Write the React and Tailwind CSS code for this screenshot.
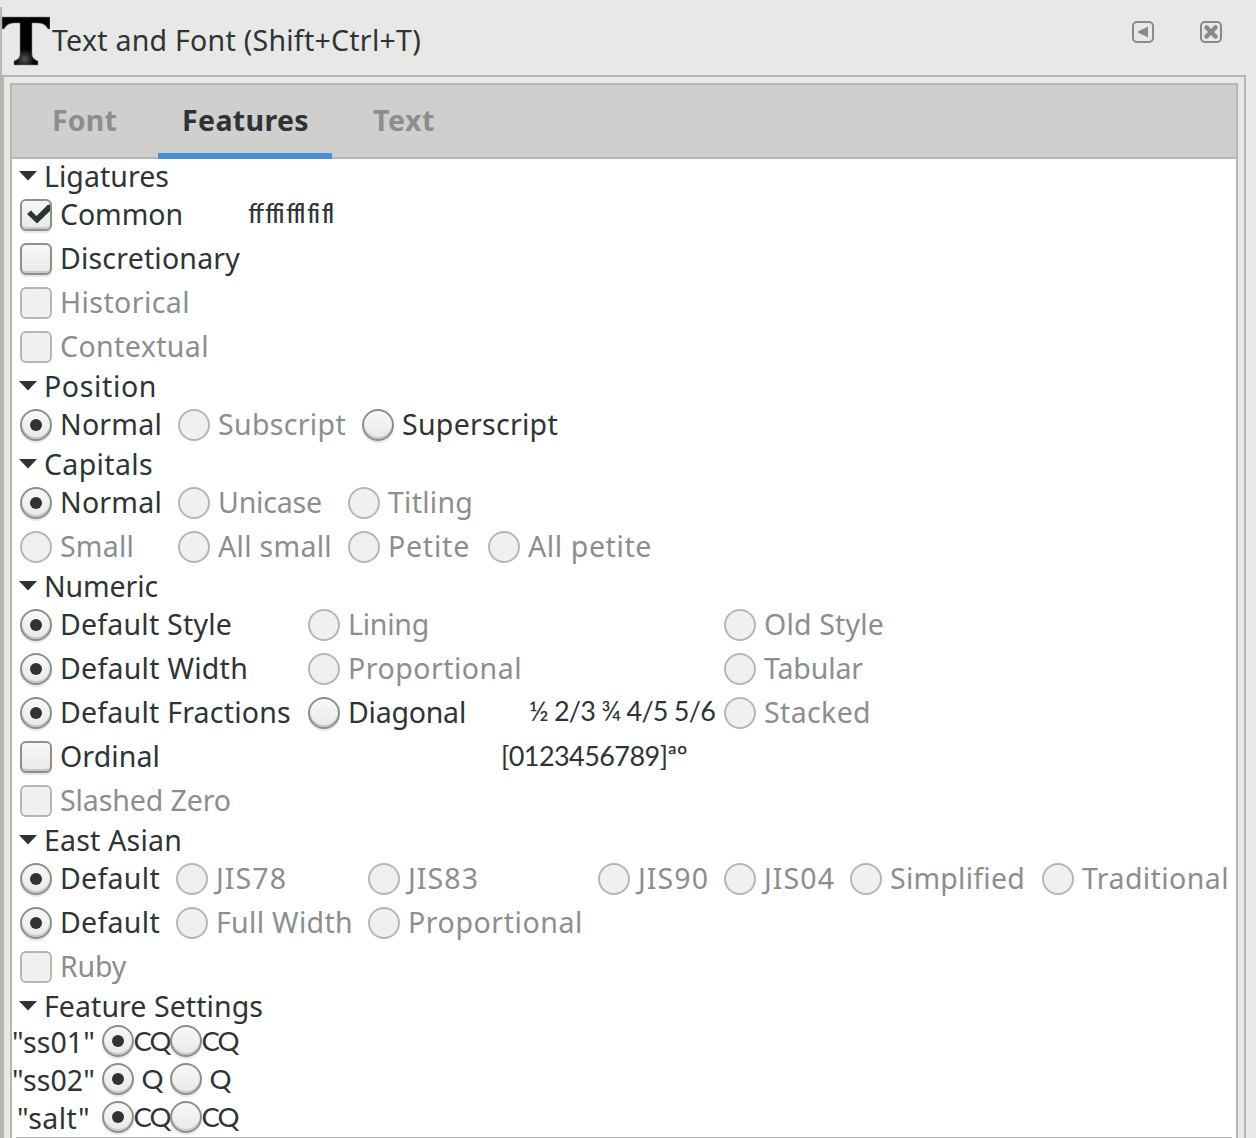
import { useLayoutEffect, useRef, useState } from "react";

function Fit({ text, w, className = "" }) {
  const ref = useRef(null);
  const [spacing, setSpacing] = useState(0);
  useLayoutEffect(() => {
    const natural = ref.current.getBoundingClientRect().width;
    setSpacing((w - 1 - natural) / text.length);
  }, [text, w]);
  return (
    <span className={`block shrink-0 whitespace-pre ${className}`} style={{ width: w }}>
      <span ref={ref} className="inline-block" style={{ letterSpacing: spacing }}>
        {text}
      </span>
    </span>
  );
}

function Check({ checked, off }) {
  return (
    <span
      className={
        off
          ? "block size-8 shrink-0 rounded-md border-2 border-[#b6b6b3] bg-[#f0f0f0]"
          : "block size-8 shrink-0 rounded-md border-2 border-[#8f8f8a] bg-linear-to-b from-[#f8f8f8] to-[#e9e9e7] shadow-[inset_0_-2px_0_#c9c9c6,0_2px_1px_#e6e6e6]"
      }
    >
      {checked && (
        <svg viewBox="0 0 28 28" className="block size-7 overflow-visible">
          <path d="M5 13L9 9.5L14.5 15L25.5 4L28 3.5V10L15 22.5Z" fill="#2e3436" />
        </svg>
      )}
    </span>
  );
}

function Radio({ checked, off }) {
  return (
    <span
      className={
        off
          ? "block size-8 shrink-0 rounded-full border-2 border-[#b6b6b3] bg-[#f0f0f0]"
          : "flex size-8 shrink-0 items-center justify-center rounded-full border-2 border-[#8f8f8a] bg-linear-to-b from-[#f8f8f8] to-[#e9e9e7] shadow-[inset_0_-2px_0_#c9c9c6,0_2px_1px_#e6e6e6]"
      }
    >
      {checked && <span className="block size-3 rounded-full bg-[#2e3436]" />}
    </span>
  );
}

function Item({ label, w, box, checked, off, children }) {
  return (
    <div className={off ? "flex items-center gap-2 text-[#8b8e8f]" : "flex items-center gap-2"}>
      {box ? <Check checked={checked} off={off} /> : <Radio checked={checked} off={off} />}
      <Fit text={label} w={w} className="-mt-0.5" />
      {children}
    </div>
  );
}

function Header({ title, w }) {
  return (
    <div className="flex h-[34px] items-center pl-[7px]">
      <svg viewBox="0 0 18 10" className="mr-[7px] h-2.5 w-[18px] shrink-0">
        <path d="M0 0H18L9 9.5Z" fill="#2e3436" />
      </svg>
      <Fit text={title} w={w} />
    </div>
  );
}

function Row({ cols = "grid-cols-1", children }) {
  return <div className={`grid h-11 items-center pl-2 ${cols}`}>{children}</div>;
}

function Setting({ tag, w, sample, sw }) {
  return (
    <div className="flex h-[38px] items-center">
      <div className="mr-1.5 mt-0.5 flex w-[84px] justify-center">
        <Fit text={tag} w={w} />
      </div>
      <Radio checked />
      <div className="flex w-9 justify-center font-['Lato'] text-[27.5px]">
        <Fit text={sample} w={sw} />
      </div>
      <Radio />
      <div className="flex w-9 justify-center font-['Lato'] text-[27.5px]">
        <Fit text={sample} w={sw} />
      </div>
    </div>
  );
}

const CAPS = "grid-cols-[158px_170px_140px_200px]";
const NUM = "grid-cols-[288px_416px_200px]";
const ASIA = "grid-cols-[156px_192px_230px_126px_126px_192px_186px]";
const ASIA2 = "grid-cols-[156px_192px_300px]";

export default function App() {
  return (
    <div className="flex h-[1138px] w-[1256px] flex-col overflow-hidden bg-[#e8e8e6] font-['Noto_Sans',sans-serif] text-[28.5px] leading-[34px] text-[#2e3436]">
      <div className="mt-[7px] flex h-[68px] shrink-0 border-l-2 border-[#b6b6b3]">
        <svg viewBox="0 0 48 50" className="mt-[9px] h-[50px] w-12 shrink-0">
          <defs>
            <radialGradient id="shine" cx="0.47" cy="0.88" r="0.22">
              <stop offset="0" stopColor="#555" />
              <stop offset="1" stopColor="#000" />
            </radialGradient>
          </defs>
          <path
            d="M0 1H48V13H46Q43 7 36 7H30V38Q30 43 36 45V49H12V45Q18 43 18 38V7H12Q5 7 2 13H0Z"
            fill="url(#shine)"
            stroke="#888"
            strokeWidth="0.6"
          />
        </svg>
        <Fit text="Text and Font (Shift+Ctrl+T)" w={370} className="ml-0.5 mt-4" />
        <div className="ml-auto mr-8 mt-3.5 flex gap-11">
          <svg viewBox="0 0 24 24" className="size-6">
            <rect x="1" y="1" width="20" height="20" rx="4" fill="none" stroke="#888a8a" strokeWidth="2" />
            <path d="M5 11L16 5.5V16.5Z" fill="#888a8a" />
          </svg>
          <svg viewBox="0 0 24 24" className="size-6">
            <rect x="1" y="1" width="20" height="20" rx="4" fill="none" stroke="#888a8a" strokeWidth="2" />
            <path d="M6.5 6.5L15.5 15.5M15.5 6.5L6.5 15.5" stroke="#888a8a" strokeWidth="4.5" strokeLinecap="round" />
          </svg>
        </div>
      </div>
      <div className="mr-2.5 flex flex-1 border-r-2 border-t-2 border-[#b6b6b3]">
        <div className="w-1 shrink-0 bg-[#b6b6b1]" />
        <div className="ml-1.5 mr-1.5 mt-1.5 flex flex-1 flex-col border-x-2 border-t-2 border-[#b6b6b3] bg-white">
          <div className="flex h-[74px] shrink-0 border-b-2 border-[#b6b6b3] bg-[#cfcfcd] font-bold text-[#8b8e8f]">
            <div className="w-[146px] pl-10 pt-[18px]">
              <Fit text="Font" w={66} />
            </div>
            <div className="h-[74px] w-[174px] border-b-[6px] border-[#4a90d9] pl-6 pt-[18px] text-[#2e3436]">
              <Fit text="Features" w={128} />
            </div>
            <div className="pl-[41px] pt-[18px]">
              <Fit text="Text" w={63} />
            </div>
          </div>

          <Header title="Ligatures" w={126} />
          <Row>
            <Item box checked label="Common" w={124}>
              <Fit text="ff ffi ffl fi fl" w={81} className="ml-[56px] -mt-1 font-['Lato'] text-[27px]" />
            </Item>
          </Row>
          <Row><Item box label="Discretionary" w={181} /></Row>
          <Row><Item box off label="Historical" w={131} /></Row>
          <Row><Item box off label="Contextual" w={150} /></Row>

          <Header title="Position" w={114} />
          <Row cols="grid-cols-[158px_184px_220px]">
            <Item checked label="Normal" w={103} />
            <Item off label="Subscript" w={129} />
            <Item label="Superscript" w={157} />
          </Row>

          <Header title="Capitals" w={110} />
          <Row cols={CAPS}>
            <Item checked label="Normal" w={103} />
            <Item off label="Unicase" w={105} />
            <Item off label="Titling" w={86} />
          </Row>
          <Row cols={CAPS}>
            <Item off label="Small" w={75} />
            <Item off label="All small" w={115} />
            <Item off label="Petite" w={83} />
            <Item off label="All petite" w={125} />
          </Row>

          <Header title="Numeric" w={115} />
          <Row cols={NUM}>
            <Item checked label="Default Style" w={173} />
            <Item off label="Lining" w={82} />
            <Item off label="Old Style" w={121} />
          </Row>
          <Row cols={NUM}>
            <Item checked label="Default Width" w={189} />
            <Item off label="Proportional" w={175} />
            <Item off label="Tabular" w={100} />
          </Row>
          <Row cols={NUM}>
            <Item checked label="Default Fractions" w={232} />
            <Item label="Diagonal" w={119}>
              <Fit text="½ 2/3 ¾ 4/5 5/6" w={187} className="ml-[54px] -mt-1 font-['Lato'] text-[27px]" />
            </Item>
            <Item off label="Stacked" w={108} />
          </Row>
          <Row cols="grid-cols-[481px_300px]">
            <Item box label="Ordinal" w={101} />
            <Fit text="[0123456789]ªº" w={187} className="-mt-[3px] font-['Lato'] text-[27px]" />
          </Row>
          <Row><Item box off label="Slashed Zero" w={172} /></Row>

          <Header title="East Asian" w={139} />
          <Row cols={ASIA}>
            <Item checked label="Default" w={101} />
            <Item off label="JIS78" w={72} />
            <Item off label="JIS83" w={72} />
            <Item off label="JIS90" w={72} />
            <Item off label="JIS04" w={72} />
            <Item off label="Simplified" w={136} />
            <Item off label="Traditional" w={148} />
          </Row>
          <Row cols={ASIA2}>
            <Item checked label="Default" w={101} />
            <Item off label="Full Width" w={138} />
            <Item off label="Proportional" w={176} />
          </Row>
          <Row><Item box off label="Ruby" w={67} /></Row>

          <Header title="Feature Settings" w={220} />
          <div className="-mt-px">
            <Setting tag={'"ss01"'} w={84} sample="CQ" sw={37} />
            <Setting tag={'"ss02"'} w={84} sample="Q" sw={21} />
            <Setting tag={'"salt"'} w={74} sample="CQ" sw={37} />
          </div>
          <div className="mx-1 mt-px h-px shrink-0 bg-[#b6b6b3]" />
        </div>
      </div>
    </div>
  );
}
